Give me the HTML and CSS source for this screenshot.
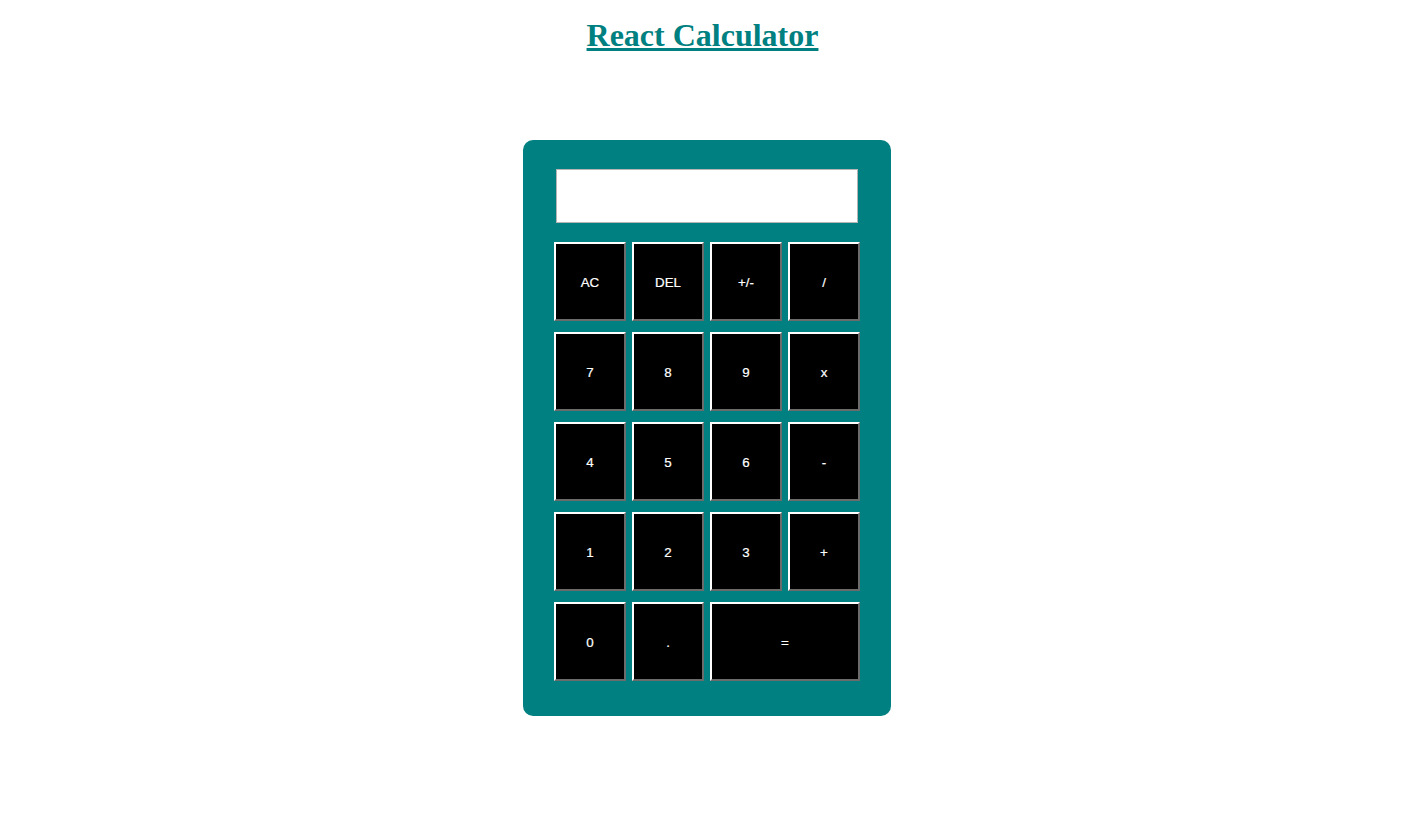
FILE: index.html
```html
<!DOCTYPE html>
<html>
<head>
<meta charset="utf-8">
<title>React Calculator</title>
<link rel="stylesheet" href="styles.css">
</head>
<body>
<h1 class="title">React Calculator</h1>
<div class="calculator">
  <div class="display"></div>
  <div class="keys">
    <button class="key">AC</button>
    <button class="key">DEL</button>
    <button class="key">+/-</button>
    <button class="key">/</button>
    <button class="key">7</button>
    <button class="key">8</button>
    <button class="key">9</button>
    <button class="key">x</button>
    <button class="key">4</button>
    <button class="key">5</button>
    <button class="key">6</button>
    <button class="key">-</button>
    <button class="key">1</button>
    <button class="key">2</button>
    <button class="key">3</button>
    <button class="key">+</button>
    <button class="key">0</button>
    <button class="key">.</button>
    <button class="key key-wide">=</button>
  </div>
</div>
</body>
</html>
```
FILE: styles.css
```css
html, body {
  margin: 0;
  background: #ffffff;
}

body {
  padding: 0 1px 0 0;
}

.title {
  margin: 17px 0 0;
  padding-right: 9px;
  font-family: "Liberation Serif", "Times New Roman", serif;
  font-size: 32px;
  line-height: 36px;
  font-weight: bold;
  color: #008080;
  text-decoration: underline;
  text-align: center;
}

.calculator {
  box-sizing: border-box;
  width: 368px;
  height: 576px;
  margin: 87px auto 0;
  padding: 29px 31px 35px;
  background: #008080;
  border-radius: 10px;
}

.display {
  box-sizing: border-box;
  height: 54px;
  margin: 0 2px 19px;
  background: #ffffff;
  border: 1px solid #b5b5b5;
}

.keys {
  display: grid;
  grid-template-columns: repeat(4, 72px);
  grid-auto-rows: 79px;
  column-gap: 6px;
  row-gap: 11px;
}

.key {
  box-sizing: border-box;
  margin: 0;
  padding: 1px 0 0;
  background: #000000;
  color: #ffffff;
  font-family: "Liberation Sans", Arial, sans-serif;
  font-size: 13.33px;
  -webkit-text-stroke: 0.2px #ffffff;
  border: 2px solid;
  border-color: #ffffff #6b6b6b #6b6b6b #ffffff;
  cursor: pointer;
}

.key-wide {
  grid-column: span 2;
}
```
